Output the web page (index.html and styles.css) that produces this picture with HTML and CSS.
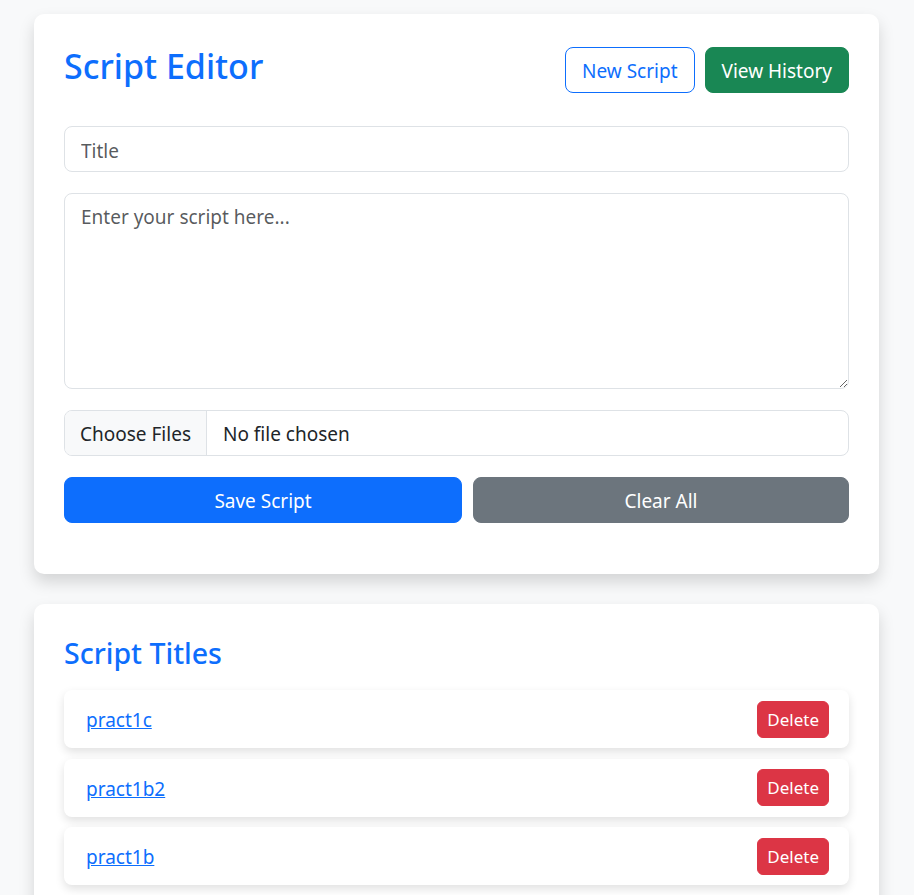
FILE: index.html
```html
<!DOCTYPE html>
<html lang="en">
<head>
<meta charset="utf-8">
<title>Script Editor</title>
<link rel="stylesheet" href="styles.css">
</head>
<body>
<div class="page">
  <section class="card">
    <div class="card-head">
      <h2 class="title">Script Editor</h2>
      <div class="head-actions">
        <button class="btn btn-outline" type="button">New Script</button>
        <button class="btn btn-success" type="button">View History</button>
      </div>
    </div>
    <input class="field" type="text" placeholder="Title">
    <textarea class="field field-area" placeholder="Enter your script here..."></textarea>
    <label class="field file-field">
      <span class="file-btn">Choose Files</span>
      <span class="file-name">No file chosen</span>
      <input class="file-input" type="file" multiple>
    </label>
    <div class="form-actions">
      <button class="btn btn-primary" type="button">Save Script</button>
      <button class="btn btn-secondary" type="button">Clear All</button>
    </div>
  </section>

  <section class="card">
    <h3 class="list-title">Script Titles</h3>
    <ul class="script-list">
      <li class="script-item"><a href="#" class="script-link">pract1c</a><button class="btn-delete" type="button">Delete</button></li>
      <li class="script-item"><a href="#" class="script-link">pract1b2</a><button class="btn-delete" type="button">Delete</button></li>
      <li class="script-item"><a href="#" class="script-link">pract1b</a><button class="btn-delete" type="button">Delete</button></li>
    </ul>
  </section>
</div>
</body>
</html>
```
FILE: styles.css
```css
html, body {
  overflow: hidden;
}
body {
  margin: 0;
  background: #f8f9fa;
  font-family: "Noto Sans", "Open Sans", sans-serif;
  color: #212529;
}
.page {
  padding: 14px 35px 0 34px;
}
.card {
  background: #fff;
  border-radius: 10px;
  box-shadow: 0 8px 16px rgba(0, 0, 0, 0.15);
  padding: 30px;
  margin-bottom: 30px;
}
.card-head {
  display: flex;
  justify-content: space-between;
  align-items: flex-start;
  margin-bottom: 33px;
}
.title {
  margin: 2px 0 0;
  font-size: 34px;
  font-weight: 500;
  line-height: 1.2;
  color: #0d6efd;
}
.head-actions {
  display: flex;
  gap: 10px;
  margin-top: 3px;
}
.btn {
  font-family: inherit;
  font-size: 19px;
  line-height: 1.5;
  height: 46px;
  padding: 2px 16px 0;
  border-radius: 8px;
  border: 1px solid transparent;
  cursor: pointer;
}
.btn-outline {
  color: #0d6efd;
  border-color: #0d6efd;
  background: #fff;
}
.btn-success {
  color: #fff;
  background: #198754;
  border-color: #198754;
}
.btn-primary {
  color: #fff;
  background: #0d6efd;
  border-color: #0d6efd;
}
.btn-secondary {
  color: #fff;
  background: #6c757d;
  border-color: #6c757d;
}
.field {
  display: block;
  width: 100%;
  box-sizing: border-box;
  height: 46px;
  margin: 0 0 21px;
  padding: 9px 16px 5px;
  font-family: inherit;
  font-size: 19px;
  line-height: 1.5;
  color: #212529;
  background: #fff;
  border: 1px solid #dee2e6;
  border-radius: 8px;
}
.field::placeholder {
  color: rgba(33, 37, 41, 0.75);
}
.field-area {
  height: 196px;
  resize: vertical;
}
.file-field {
  display: flex;
  align-items: stretch;
  padding: 0;
  overflow: hidden;
}
.file-btn {
  display: flex;
  align-items: center;
  padding: 3px 15px 0;
  background: #f8f9fa;
  border-right: 1px solid #dee2e6;
}
.file-name {
  display: flex;
  align-items: center;
  padding: 3px 16px 0;
}
.file-input {
  display: none;
}
.form-actions {
  display: grid;
  grid-template-columns: 398fr 376fr;
  gap: 11px;
  margin-bottom: 21px;
}
.list-title {
  margin: 2px 0 20px;
  font-size: 28.5px;
  font-weight: 500;
  line-height: 1.2;
  color: #0d6efd;
}
.script-list {
  list-style: none;
  margin: 0;
  padding: 0;
  display: flex;
  flex-direction: column;
  gap: 10.5px;
}
.script-item {
  display: flex;
  justify-content: space-between;
  align-items: center;
  height: 58px;
  box-sizing: border-box;
  padding: 0 20px 0 22px;
  background: #fff;
  border-radius: 8px;
  box-shadow: 0 4px 10px rgba(0, 0, 0, 0.12);
}
.script-link {
  font-size: 19px;
  color: #0d6efd;
  text-decoration: underline;
  padding-top: 2px;
}
.btn-delete {
  font-family: inherit;
  font-size: 17px;
  line-height: 1.5;
  height: 37px;
  padding: 1px 9px 0;
  color: #fff;
  background: #dc3545;
  border: 1px solid #dc3545;
  border-radius: 6px;
  cursor: pointer;
}
```
